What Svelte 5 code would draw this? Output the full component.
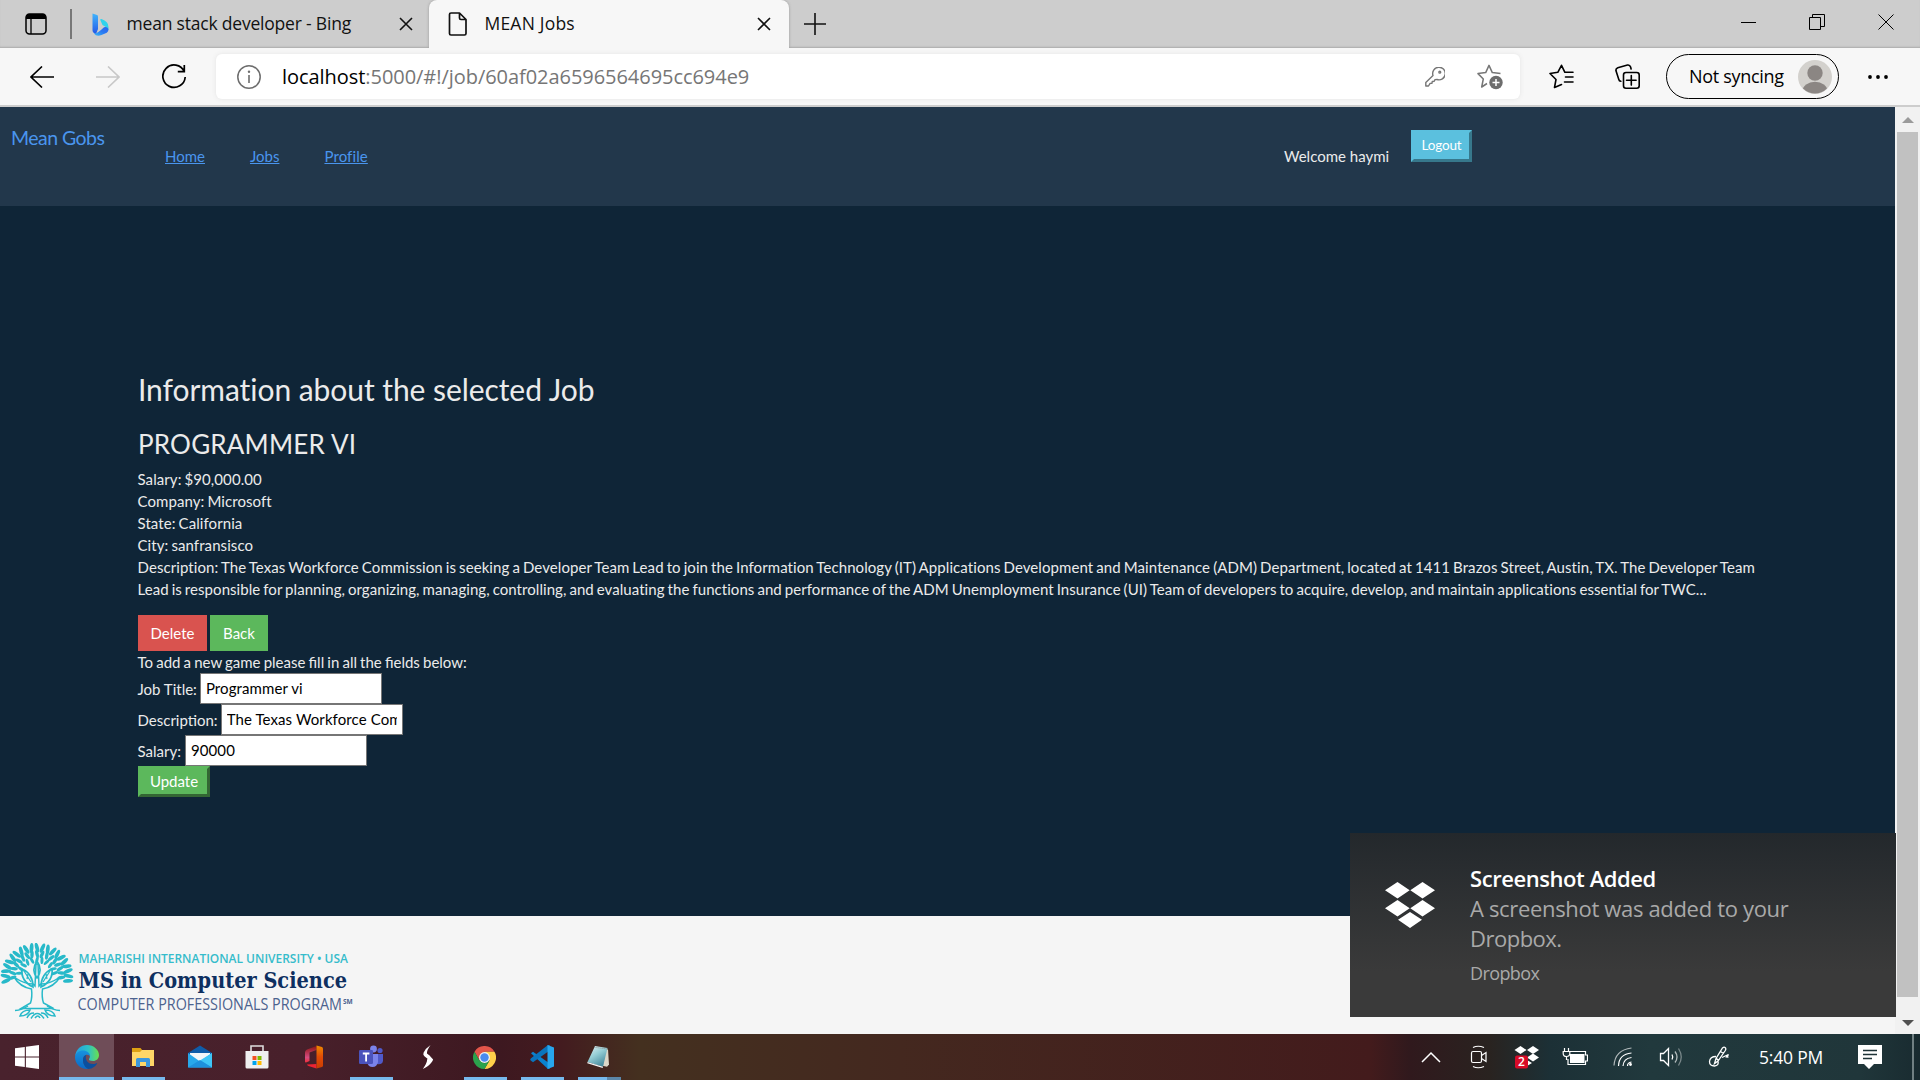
<script>
  const details = [
    'Salary: $90,000.00',
    'Company: Microsoft',
    'State: California',
    'City: sanfransisco'
  ];
  const fields = [
    { label: 'Job Title:', value: 'Programmer vi' },
    { label: 'Description:', value: 'The Texas Workforce Commission is seeking a Developer' },
    { label: 'Salary:', value: '90000' }
  ];
  // Leaves of the crest: rings of small ellipses fanned around the crown.
  const rings = [
    { r: 31.5, n: 21, from: -10, to: 190, rx: 5, ry: 1.9 },
    { r: 24.5, n: 17, from: -4, to: 184, rx: 4, ry: 1.7 },
    { r: 18, n: 11, from: 10, to: 170, rx: 3.6, ry: 1.5 }
  ];
  const leaves = rings.flatMap((g) =>
    Array.from({ length: g.n }, (_, i) => {
      const a = g.from + ((g.to - g.from) * i) / (g.n - 1);
      const rad = (a * Math.PI) / 180;
      return { x: 37 + g.r * Math.cos(rad), y: 33 - g.r * 0.9 * Math.sin(rad), a: -a + (i % 2 ? 14 : -14), rx: g.rx, ry: g.ry };
    })
  );
</script>

<div class="screen">
  <div class="tabs">
    <svg class="tabmenu" width="22" height="22" viewBox="0 0 22 22"><rect x="1" y="1" width="20" height="20" rx="3.5" fill="none" stroke="#000" stroke-width="1.5"/><path d="M1 6V4.500A3.500 3.500 0 0 1 4.500 1h13A3.500 3.500 0 0 1 21 4.500V6z"/><path d="M6 6v15" stroke="#000" stroke-width="1.300"/></svg>
    <i class="divider"></i>
    <div class="tab first">
      <svg width="17" height="23" viewBox="0 0 17 23"><defs><linearGradient id="b1" x1="0" y1="0" x2="0" y2="1"><stop offset="0" stop-color="#41b4fb"/><stop offset="1" stop-color="#2357e8"/></linearGradient><linearGradient id="b2" x1="1" y1="0" x2="0" y2="1"><stop offset="0" stop-color="#2a62ee"/><stop offset=".5" stop-color="#2a7af2"/><stop offset="1" stop-color="#36b8f6"/></linearGradient></defs><path d="M.5.500 5 2q1 .4 1 1.400V16l-2 5Q.5 20 .5 17z" fill="url(#b1)"/><path d="M8.500 7.500q-.9-2 1-1.400Q16.500 8.500 16.500 14v3L13 13.500 10.500 12z" fill="#31d3ec"/><path d="M2 20.500Q5 21 12 14.200q3-1 4.300 1.500.7 2.300-1.500 4L9.500 22q-5 2-7.500-1.500z" fill="url(#b2)"/></svg>
      <span class="t1">mean stack developer - Bing</span>
      <svg class="x" width="14" height="14" viewBox="0 0 14 14"><path d="m1 1 12 12M13 1 1 13" stroke="#111" stroke-width="1.600"/></svg>
    </div>
    <div class="tab active">
      <svg width="20" height="24" viewBox="0 0 20 24" fill="none" stroke="#111" stroke-width="1.700" stroke-linejoin="round"><path d="M3 1h8.500L18 7.500V21.500q0 1.500-1.500 1.500H3q-1.500 0-1.500-1.500v-19Q1.500 1 3 1zM11.500 1v5q0 1.500 1.500 1.500h5"/></svg>
      <span class="t2">MEAN Jobs</span>
      <svg class="x" width="14" height="14" viewBox="0 0 14 14"><path d="m1 1 12 12M13 1 1 13" stroke="#111" stroke-width="1.600"/></svg>
    </div>
    <svg class="plus" width="22" height="22" viewBox="0 0 22 22"><path d="M11 0v22M0 11h22" stroke="#111" stroke-width="1.600"/></svg>
    <div class="controls">
      <svg width="16" height="16" viewBox="0 0 16 16"><path d="M1 8.500h15" stroke="#000"/></svg>
      <svg width="16" height="16" viewBox="0 0 16 16" fill="none" stroke="#000"><path d="M.5 3.500h11v12H.5zM3.500 3.500v-3h12v12h-4"/></svg>
      <svg width="16" height="16" viewBox="0 0 16 16"><path d="m.5.500 15 15m0-15-15 15" stroke="#000"/></svg>
    </div>
  </div>

  <div class="toolbar">
    <svg class="nav" width="24" height="22" viewBox="0 0 24 22" fill="none" stroke="#000" stroke-width="1.600"><path d="M24 11H1M12 .5 1 11l11 10.500"/></svg>
    <svg class="nav" width="24" height="22" viewBox="0 0 24 22" fill="none" stroke="#c8c8c8" stroke-width="1.600"><path d="M0 11h23M12 .5 23 11 12 21.500"/></svg>
    <svg class="nav" width="25" height="25" viewBox="0 0 25 25" fill="none" stroke="#000" stroke-width="1.700"><path d="M22.200 7.500A11.200 11.200 0 1 0 23.200 13M22.300 1v6.700h-6.500"/></svg>
    <div class="address">
      <svg class="info" width="24" height="24" viewBox="0 0 24 24"><circle cx="12" cy="12" r="11.200" fill="none" stroke="#6d6d6d" stroke-width="1.500"/><path d="M12 10v8" stroke="#6d6d6d" stroke-width="1.600"/><circle cx="12" cy="6.800" r="1.200" fill="#6d6d6d"/></svg>
      <span class="url"><b>localhost</b>:5000/#!/job/60af02a6596564695cc694e9</span>
      <svg class="key" width="20" height="20" viewBox="0 0 20 20" fill="none" stroke="#767676" stroke-width="1.400" stroke-linejoin="round"><path d="M8 8.500A6.300 6.300 0 1 1 12 12.500l-2 .1-.8 1.700-1.900.2-.4 1.800-1.800.1-1.600 2.600H.8v-3.400L8 8.500z"/><circle cx="14.800" cy="5.200" r=".9"/></svg>
      <svg width="26" height="26" viewBox="0 0 26 26"><path d="M10 19.500 4.700 23l1.600-8L1 9.600l7.700-1L12 1.400l3.300 7.200 8.200 1" fill="none" stroke="#767676" stroke-width="1.500" stroke-linejoin="round"/><circle cx="19" cy="18.500" r="6.700" fill="#6d6d6d"/><path d="M19 15v7m-3.500-3.500h7" stroke="#fff" stroke-width="1.500"/></svg>
    </div>
    <svg class="fav" width="25" height="25" viewBox="0 0 25 25" fill="none" stroke="#000" stroke-width="1.600" stroke-linejoin="round" stroke-linecap="round"><path d="M12.500 20.500 5.500 23.500 7 15.500 1 9.500l7.800-1.200L12.500 1.300l3.400 7H24M16.500 13H24M15.500 18H24"/></svg>
    <svg class="coll" width="25" height="25" viewBox="0 0 25 25" fill="none" stroke="#000" stroke-width="1.600" stroke-linecap="round"><rect x="8.500" y="8.500" width="15.700" height="15.700" rx="2.500"/><path d="M16.300 11.500v9.600M11.500 16.300h9.600M5.800 17.300q-1.600-.2-2-1.800L1 6.800Q.5 4.500 2.800 3.700L12.500 1q2.300-.4 3.100 2l.5 2"/></svg>
    <div class="profile">
      <span>Not syncing</span>
      <svg width="34" height="34" viewBox="0 0 34 34"><defs><clipPath id="av"><circle cx="17" cy="17" r="16.500"/></clipPath></defs><circle cx="17" cy="17" r="17" fill="#d3d1cd"/><g clip-path="url(#av)" fill="#8b8683"><circle cx="17" cy="13" r="7.700"/><ellipse cx="17" cy="31" rx="12.500" ry="9.300"/></g></svg>
    </div>
    <svg class="dots" width="20" height="4" viewBox="0 0 20 4"><circle cx="2" cy="2" r="1.900"/><circle cx="10" cy="2" r="1.900"/><circle cx="18" cy="2" r="1.900"/></svg>
  </div>

  <div class="viewport">
    <div class="page">
      <header>
        <a class="brand">Mean Gobs</a>
        <nav><a>Home</a><a>Jobs</a><a class="last">Profile</a></nav>
        <span class="welcome">Welcome haymi</span>
        <button class="logout">Logout</button>
      </header>
      <main>
        <h2>Information about the selected Job</h2>
        <h3>PROGRAMMER VI</h3>
        <div class="details">
          {#each details as d}<div class="short">{d}</div>{/each}
          <div class="l1">Description: The Texas Workforce Commission is seeking a Developer Team Lead to join the Information Technology (IT) Applications Development and Maintenance (ADM) Department, located at 1411 Brazos Street, Austin, TX. The Developer Team</div>
          <div class="l2">Lead is responsible for planning, organizing, managing, controlling, and evaluating the functions and performance of the ADM Unemployment Insurance (UI) Team of developers to acquire, develop, and maintain applications essential for TWC...</div>
        </div>
        <div class="actions"><button class="delete">Delete</button><button class="back">Back</button></div>
        <p>To add a new game please fill in all the fields below:</p>
        {#each fields as f}
          <label><span>{f.label}</span><input value={f.value} /></label>
        {/each}
        <button class="update">Update</button>
      </main>
      <footer>
        <svg width="360" height="84" viewBox="0 0 360 84">
          <g fill="#27b9c9">
            {#each leaves as l}<ellipse rx={l.rx} ry={l.ry} transform="translate({l.x} {l.y}) rotate({l.a})"/>{/each}
            <path d="M31.500 46Q20 44 14 34q10 7 19 7l2 2 1-22h2l1 22 2-2q9 0 19-7-6 10-17.500 12-1 8 1 14l10 5.500H21L30.500 60q2-6 1-14z" fill="none" stroke="#27b9c9" stroke-width="1.500"/>
            <path d="M33 44C25 40 21 34 22 26c7 3 11 9 11 18zM41 44c8-4 12-10 11-18-7 3-11 9-11 18zM37 35c-4-5-4-11 0-17 4 6 4 12 0 17z" fill="none" stroke="#27b9c9" stroke-width="1.700"/>
            <path d="m24 28 7 11m19-11-7 11M27 36l1-5m19 5-1-5" fill="none" stroke="#27b9c9" stroke-width="1.300"/>
            <path d="M15 67.500q7-.5 13-4.500M60 67.500q-7-.5-13-4.500M20 73q2-6 10-6-2 6-10 6zm35 0q-2-6-10-6 2 6 10 6zM27 75q2-5 7-5m14 5q-2-5-7-5M31 75.500q6-10 13 0M35 75q3-4 5 0" fill="none" stroke="#27b9c9" stroke-width="1.500"/>
          </g>
          <text x="78.500" y="19.500" font-size="12.800" textLength="269.500" lengthAdjust="spacingAndGlyphs" class="s1">MAHARISHI INTERNATIONAL UNIVERSITY • USA</text>
          <text x="78.500" y="45" font-size="22.500" textLength="268.500" lengthAdjust="spacingAndGlyphs" class="s2">MS in Computer Science</text>
          <text x="77.500" y="67" font-size="15.500" textLength="264.500" lengthAdjust="spacingAndGlyphs" class="s3">COMPUTER PROFESSIONALS PROGRAM</text>
          <text x="343" y="60.500" font-size="6.500" class="s4">SM</text>
        </svg>
      </footer>
    </div>
    <div class="scroll">
      <svg width="12" height="6" viewBox="0 0 12 6"><path d="M0 6 6 0l6 6z" fill="#9a9a9a"/></svg>
      <i></i>
      <svg width="12" height="6" viewBox="0 0 12 6"><path d="m0 0 6 6 6-6z" fill="#505050"/></svg>
    </div>
    <div class="toast">
      <svg width="50" height="46" viewBox="0 0 50 46" fill="#fff"><path d="M12.500 0 24.700 8.200l-12.200 8.200L0 8.200zM37.500 0 50 8.200l-12.500 8.200L25.300 8.200zM12.500 18l12.200 8.200-12.200 8.200L0 26.200zM37.500 18 50 26.200l-12.500 8.200-12.200-8.200zM25 30l12 7.800L25 46l-12-8.200z"/></svg>
      <div>
        <strong>Screenshot Added</strong>
        <span class="m1">A screenshot was added to your</span>
        <span class="m2">Dropbox.</span>
        <small>Dropbox</small>
      </div>
    </div>
  </div>

  <div class="taskbar">
    <div class="start"><svg width="24" height="24" viewBox="0 0 24 24" fill="#fff"><path d="M0 3.300 9.800 2v9.400H0zM10.900 1.800 24 0v11.400H10.900zM0 12.500h9.800V22L0 20.700zM10.900 12.500H24V24l-13.100-1.800z"/></svg></div>
    <div class="task current">
      <svg width="24" height="24" viewBox="0 0 24 24"><defs><linearGradient id="e1"><stop offset="0" stop-color="#249fe0"/><stop offset=".55" stop-color="#2cc1c8"/><stop offset="1" stop-color="#6be04c"/></linearGradient><linearGradient id="e2" x1="0" y1="0" x2="0" y2="1"><stop offset="0" stop-color="#1793df"/><stop offset="1" stop-color="#0c69c5"/></linearGradient></defs><path d="M.2 11C.8 4.500 5.800 0 12 0c7 0 12 5 12 10 0 3.800-2.700 6-6 6-3 0-4.500-1-4-2 2-3 .5-5.500-3-5.500C6 8.500 2 8 .2 11z" fill="url(#e1)"/><path d="M0 12C.5 8 4 5.500 8 5.500c4 0 7 2.500 7 5.500-4-3-7 0-7 4 0 4.500 3 8 7 8.500C7 25.500 0 20 0 12z" fill="url(#e2)"/><path d="M8 15c0-3 1.500-4.500 3.300-5C9.500 14 12.500 19 18 19c2 0 3.500-1 4.200-.7C21 21 17.500 24 13.500 24 10.500 23 8 19.500 8 15z" fill="#0b4f9e"/></svg>
    </div>
    <div class="task open">
      <svg width="24" height="24" viewBox="0 0 24 24"><path d="M1 3h8.500l2 2.500V9H1z" fill="#dea113"/><path d="M1 7h8l2-2h12v16H1z" fill="#ffd667"/><path d="M5 21v-6.500q0-1.500 1.500-1.500h11q1.500 0 1.500 1.500V22h-4v-5H9v5H5z" fill="#3c97dd"/></svg>
    </div>
    <div class="task">
      <svg width="24" height="24" viewBox="0 0 24 24"><path d="M0 8 12 .5 24 8v5H0z" fill="#0f5ca9"/><path d="M2 8h20v5l-10 6L2 13z" fill="#f3f6f9"/><path d="m0 8 12 8.500L24 8v14.500H0z" fill="#28a8ea"/><path d="m12 15.500 12-7.500v14.500z" fill="#3fc6f7"/><path d="m0 22.500 12-7.500 12 7.500z" fill="#1e91dc"/></svg>
    </div>
    <div class="task">
      <svg width="24" height="24" viewBox="0 0 24 24"><path d="M6 7V1h12v6" fill="none" stroke="#ddd" stroke-width="1.600"/><path d="M.5 6h23v16q0 1.500-1.500 1.500H2Q.5 23.500.5 22z" fill="#efefef"/><path d="M7.500 11h4v4h-4z" fill="#f25022"/><path d="M12.500 11h4v4h-4z" fill="#7fba00"/><path d="M7.500 16h4v4h-4z" fill="#00a4ef"/><path d="M12.500 16h4v4h-4z" fill="#ffb900"/></svg>
    </div>
    <div class="task">
      <svg width="20" height="24" viewBox="0 0 20 24"><defs><linearGradient id="o1" x1="0" y1="0" x2="0" y2="1"><stop offset="0" stop-color="#8c1515"/><stop offset=".7" stop-color="#d64c80"/><stop offset="1" stop-color="#f02d37"/></linearGradient><linearGradient id="o2" x1="0" y1="0" x2="0" y2="1"><stop offset="0" stop-color="#f08b00"/><stop offset=".5" stop-color="#e04a05"/><stop offset="1" stop-color="#ca3d03"/></linearGradient></defs><path d="M12.500 1 3 4.500Q1 5.500 1 7.500v9q0 1.200 1 1L5.500 16V7.500l7-2.500z" fill="url(#o1)"/><path d="m3 19.500 9.500-.5v4.500l-8-2.500q-1.500-.8-1.500-1.500z" fill="#ed2433"/><path d="m12.500.5 5.500 1.500q1 .5 1 1.500v17q0 1-1 1.500l-5.500 1.500z" fill="url(#o2)"/></svg>
    </div>
    <div class="task open">
      <svg width="24" height="24" viewBox="0 0 24 24"><circle cx="21" cy="5.500" r="2.600" fill="#5059c9"/><path d="M18 9h6v7q-1 4-6 3z" fill="#5059c9"/><circle cx="14.500" cy="4" r="3.400" fill="#7b83eb"/><path d="M8 9h11v8q-1 5-5.500 5T8 17z" fill="#7b83eb"/><rect y="5" width="14" height="14" rx="1.200" fill="#4b53bc"/><path d="M3.800 8.500h6.600M7.100 8.500v8" stroke="#fff" stroke-width="1.800"/></svg>
    </div>
    <div class="task">
      <svg width="12" height="24" viewBox="0 0 14 28" fill="#fff"><path d="M10 0Q4 4 1.800 9q-.9 2.500 1 4l4.400 3.500 2-4-3.400-2.500Q5.500 6 10 0zM13 17l-4.500-5-2.500 5q0 4-5 11 7-3 10-7.500Q12.500 18.500 13 17z"/></svg>
    </div>
    <div class="task open">
      <svg width="23" height="23" viewBox="-12 -12 24 24"><path d="M-10.400-6A12 12 0 0 1 10.400-6H0L-5.200 3z" fill="#e2554a"/><path d="M10.400-6A12 12 0 0 1 0 12L5.200 3 0-6z" fill="#ffd04a"/><path d="M0 12A12 12 0 0 1-10.400-6L-5.200 3 0 6 5.200 3z" fill="#2ba24c"/><circle r="5.700" fill="#f3f3f3"/><circle r="4.400" fill="#4a8af0"/></svg>
    </div>
    <div class="task open">
      <svg width="24" height="24" viewBox="0 0 24 28" preserveAspectRatio="none"><path d="M1 9.500 3 8l17 14v5.500L18 28z" fill="#0a82cf"/><path d="M1 18.500 3 20 20 6V.5L18 0 1 15.500q-1.500 1.500 0 3z" fill="#0a74bd"/><path d="m17.500 0 6.500 2.800v22.400L17.500 28z" fill="#27a6ee"/></svg>
    </div>
    <div class="task open double">
      <svg width="24" height="22" viewBox="0 0 24 26" preserveAspectRatio="none"><defs><linearGradient id="n1" x1="0" y1="0" x2=".6" y2="1"><stop offset="0" stop-color="#e7f5f6"/><stop offset=".5" stop-color="#93ccd4"/><stop offset="1" stop-color="#488b9e"/></linearGradient></defs><path d="m8 1 13 3 1 18-2 2.500L6 21z" fill="#ddd7c8"/><path d="m8 0 12.500 2.500-4.500 22L.5 19z" fill="url(#n1)"/><path d="m.5 19 15.500 5.500-.3 1.500L.3 20.500z" fill="#f5f5f5"/><path d="m7.500 1.500 12.500 2" stroke="#888" stroke-dasharray="1 1"/></svg>
    </div>
    <div class="tray">
      <div class="cell"><svg width="20" height="12" viewBox="0 0 20 12"><path d="m1 11 9-9 9 9" fill="none" stroke="#fff" stroke-width="1.500"/></svg></div>
      <div class="cell"><svg width="18" height="24" viewBox="0 0 18 24" fill="none" stroke="#fff" stroke-width="1.200"><rect x="1.500" y="6.500" width="10" height="11" rx="1.500"/><path d="m11.500 10.500 4.500-3v9l-4.500-3M3 2.500q5-2.500 11 0M3 21.500q5 2.500 11 0"/></svg></div>
      <div class="cell"><svg width="26" height="24" viewBox="0 0 26 24"><path d="m6.500 1 6 4-6 4-6-4zM19 1l6 4-6 4-6-4zM19 8.500l6 4-6 4-6-4zM13 15l5 3-5 3z" fill="#fff"/><rect x="1" y="10.500" width="13" height="13" rx="2" fill="#d80b28"/><text x="7.500" y="21" text-anchor="middle" class="badge">2</text></svg></div>
      <div class="cell"><svg width="26" height="20" viewBox="0 0 26 20"><path d="M8 7h14.500v9H8z" fill="#fff"/><path d="M8 4.500h15.500V8h2v6h-2v3.500H6V12M2.500 1v3.500m4-3.500v3.500M1.200 4.500h6.600v2q0 3-3.300 3t-3.300-3zM4.500 9.500V13" fill="none" stroke="#fff" stroke-width="1.200"/></svg></div>
      <div class="cell"><svg width="20" height="20" viewBox="0 0 20 20" fill="none" stroke="#fff" stroke-width="1.200"><path d="M1 18.500Q2 3 18.500 1" opacity=".65"/><path d="M5.500 19Q6 7 18.500 6M10 19q.5-7.500 8.500-8.500M14.500 19q0-3.500 4-4"/><circle cx="17.500" cy="17.500" r="1.400" fill="#fff" stroke="none"/></svg></div>
      <div class="cell"><svg width="24" height="20" viewBox="0 0 24 20" fill="none" stroke="#fff" stroke-width="1.300"><path d="M1.500 6.500h3l5-5v17l-5-5h-3z"/><path d="M13 7.500q1.500 2.500 0 5"/><path d="M16 4.500q4 5.500 0 11" opacity=".65"/><path d="M19.500 1.500q5.500 8.500 0 17" opacity=".4"/></svg></div>
      <div class="cell"><svg width="22" height="22" viewBox="0 0 22 22" fill="none" stroke="#fff" stroke-width="1.300"><path d="M6.500 17.500 8 12.500 14.500 2q1.500-1.500 2.800-.3 1 1.200 0 2.800L10 15zM12.500 5.500l3 2M8 12l2.500 2.500M8 10.500q-6 0-6.500 5 0 4.500 5 4.500 4.500-.5 3.500-4.500M14 11.500l6.500-3-2 2.500 2 .2"/></svg></div>
      <span class="time">5:40 PM</span>
      <svg class="note" width="24" height="25" viewBox="0 0 24 25"><path d="M0 0h24v19h-8l-5 5-5-5H0z" fill="#fff"/><path d="M5 5.500h14M5 9.500h14M5 13.500h9" stroke="#1e3337" stroke-width="1.300"/></svg>
      <i class="peek"></i>
    </div>
  </div>
</div>

<style>
  :global(body) { margin: 0; overflow: hidden; }
  * { box-sizing: border-box; }
  svg { display: block; flex: none; }
  .screen { width: 1920px; height: 1080px; display: flex; flex-direction: column; font-family: 'Open Sans', sans-serif; white-space: nowrap; }
  .tabs { height: 48px; flex: none; background: #cdcdcd; display: flex; align-items: center; box-shadow: inset 0 -2px 2px -1px #aaa; }
  .tabmenu { margin-left: 25px; }
  .divider { width: 1.5px; height: 30px; background: #777; margin-left: 23px; }
  .tab { display: flex; align-items: center; height: 48px; font-size: 17.5px; color: #111; }
  .first { width: 357px; padding: 0 16px 0 20px; }
  .tab span { padding-bottom: 2px; }
  .first span { margin-left: 18px; }
  .t1 { letter-spacing: -0.2px; }
  .t2 { letter-spacing: 0.2px; }
  .x { margin-left: auto; }
  .active { width: 360px; background: #f7f7f7; border-radius: 8px 8px 0 0; padding: 0 18px 0 19px; box-shadow: 0 0 3px #999; clip-path: inset(0 -3px 0 -3px); }
  .active span { margin-left: 17px; }
  .plus { margin-left: 15px; }
  .controls { margin-left: auto; display: flex; gap: 53px; padding: 0 26px 4px 0; }
  .toolbar { height: 59px; flex: none; background: #f7f7f7; border-bottom: 2px solid #cdcdcd; display: flex; align-items: center; padding-left: 30px; }
  .nav { margin-right: 42px; }
  .nav:nth-child(3) { margin-right: 29px; }
  .address { width: 1304px; height: 45px; background: #fff; border-radius: 6px; box-shadow: 0 0 5px #e4e4e4; display: flex; align-items: center; padding: 0 17px 0 21px; }
  .url { margin-left: 21px; color: #767676; font-size: 20px; letter-spacing: -0.05px; }
  .url b { color: #000; font-weight: 400; }
  .key { margin: 0 32px 0 auto; }
  .fav { margin-left: 29px; }
  .coll { margin-left: 41px; }
  .profile { width: 173px; height: 45px; margin-left: 26px; border: 1.5px solid #000; border-radius: 23px; display: flex; align-items: center; justify-content: space-between; padding: 0 6px 0 22px; font-size: 18px; letter-spacing: -.3px; }
  .profile span { padding-bottom: 1px; }
  .dots { margin-left: 29px; }
  .viewport { position: relative; height: 927px; display: flex; flex: none; }
  .page { width: 1895px; display: flex; flex-direction: column; background: #0f2537; color: #ebebeb; font: 15px/22px Lato, sans-serif; }
  header { height: 99px; background: #22374b; display: flex; align-items: flex-start; flex: none; }
  .brand { font-size: 19.5px; line-height: 24px; margin: 19px 0 0 11px; width: 154px; color: #4a95ee; letter-spacing: -.54px; }
  nav { display: flex; gap: 45px; margin-top: 38px; width: 1119px; }
  nav a { color: #4a95ee; text-decoration: underline; }
  .last { letter-spacing: .1px; }
  .welcome { margin-top: 38px; width: 127px; }
  button { font-family: Lato, sans-serif; color: #fff; border: 0; padding: 0; font-size: 15px; text-align: center; }
  .logout { margin-top: 23px; width: 61px; height: 32px; background: #5bc0de; border: 3px solid; border-color: #5bc0de #37788c #37788c #5bc0de; font-size: 13.5px; letter-spacing: -.15px; padding-bottom: 2px; }
  main { padding: 167px 0 0 138px; height: 710px; flex: none; }
  h2, h3, p { margin: 0; font-weight: 400; }
  h2 { font-size: 30px; line-height: 33px; height: 56px; letter-spacing: -.06px; }
  h3 { font-size: 26px; line-height: 30px; height: 39px; letter-spacing: .2px; }
  .details { word-spacing: -.9px; margin-left: -.5px; }
  .short { letter-spacing: .08px; }
  .l1 { letter-spacing: .081px; }
  .l2 { letter-spacing: .057px; }
  p { word-spacing: -.7px; margin-left: -.5px; }
  .actions { display: flex; gap: 3px; padding-top: 15px; }
  .actions button { height: 36px; }
  .delete { width: 69px; background: #d9534f; }
  .back { width: 58px; background: #5cb85c; }
  label { display: flex; gap: 3px; height: 31px; align-items: center; margin-left: -.5px; }
  label:nth-of-type(3) { gap: 4px; }
  input { width: 182px; height: 31px; border: 1px solid #767676; padding: 0 5px 2px; font: 15px Lato, sans-serif; letter-spacing: .1px; color: #000; background: #fff; border-radius: 0; }
  .update { display: block; width: 72px; height: 31px; background: #5cb85c; border: 3px solid; border-color: #5cb85c #336633 #336633 #5cb85c; padding-bottom: 2px; }
  footer { flex: 1; background: #f5f5f5; padding-top: 27px; }
  .s1 { fill: #35bccb; font-family: 'Open Sans', sans-serif; font-weight: 600; }
  .s2 { fill: #0e2f60; font-family: 'DejaVu Serif', serif; font-weight: 700; }
  .s3, .s4 { fill: #4c628e; font-family: 'Open Sans', sans-serif; }
  .s4 { font-weight: 700; }
  .scroll { width: 25px; background: #f1f1f1; display: flex; flex-direction: column; align-items: center; padding: 10px 0 8px; }
  .scroll i { width: 21px; height: 865px; background: #c1c1c1; margin: 9px 0 auto; }
  .toast { position: absolute; left: 1350px; top: 726px; width: 546px; height: 184px; background: linear-gradient(#23282c, #3a3a3a 75%); display: flex; padding: 30px 0 0 35px; }
  .toast > svg { margin: 19px 35px 0 0; }
  .toast div { display: flex; flex-direction: column; font-size: 22px; line-height: 30px; color: #a9a9a9; }
  .toast strong { color: #fff; font-weight: 600; letter-spacing: -.43px; }
  .toast small { font-size: 18px; line-height: 41px; letter-spacing: -.6px; }
  .m1 { letter-spacing: -.33px; }
  .m2 { letter-spacing: -.5px; }
  .taskbar { height: 46px; flex: none; display: flex; background: linear-gradient(90deg, #49222d 0, #48202b 300px, #3d1820 500px, #431b1f 560px, #44301f 640px, #44281f 900px, #431b1c 1370px, #30191d 1410px, #292320 1490px, #1c3036 1550px, #21393d 1650px, #20363a 1860px, #192b30 1920px); }
  .start { width: 58px; display: flex; align-items: center; padding-left: 15px; }
  .task { width: 57px; display: flex; align-items: center; justify-content: center; padding-right: 2px; }
  .current { background: linear-gradient(#76b9ed, #76b9ed) bottom / 55px 3px no-repeat, linear-gradient(#6f4d58, #6f4d58) center / 55px 100% no-repeat; padding-right: 0; }
  .open { background: linear-gradient(#76b9ed, #76b9ed) bottom / 43px 3px no-repeat; }
  .double { background: linear-gradient(90deg, #76b9ed 29px, #5b86a8 29px) bottom / 43px 3px no-repeat; }
  .tray { display: flex; align-items: center; margin-left: auto; width: 513px; }
  .cell { width: 48px; display: flex; justify-content: center; }
  .badge { fill: #fff; font: 600 12px 'Open Sans', sans-serif; }
  .time { color: #fff; font-size: 17.5px; letter-spacing: -.2px; margin-left: 16px; width: 99px; }
  .peek { width: 2px; height: 46px; background: #718083; margin-left: 30px; }
</style>
